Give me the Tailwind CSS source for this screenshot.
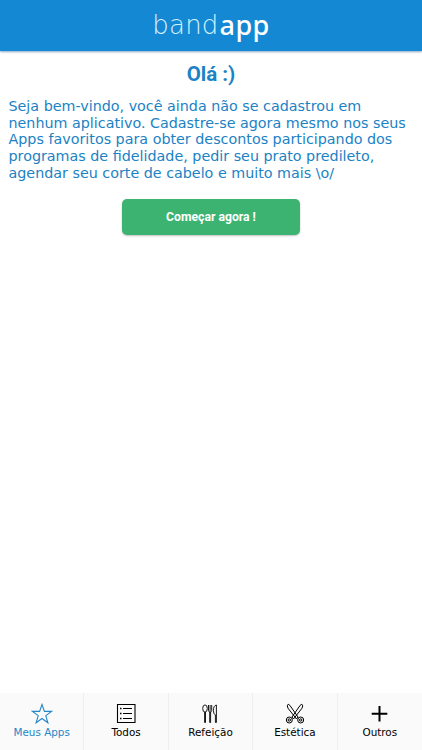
<!DOCTYPE html>
<html lang="pt-BR">
<head>
    <meta charset="UTF-8">
    <meta name="viewport" content="width=device-width, initial-scale=1.0">
    <title>bandapp</title>
    <script src="https://cdn.jsdelivr.net/npm/@tailwindcss/browser@4"></script>
</head>
<body class="h-screen flex flex-col bg-white overflow-hidden font-['DejaVu_Sans',sans-serif]">

    <header class="h-[51px] shrink-0 bg-[#1488d2] flex justify-center text-white shadow-[0_1px_2px_rgba(20,80,130,0.5)]">
        <h1 class="flex items-start whitespace-nowrap leading-9">
            <span class="pt-[7px] font-['DejaVu_Sans_Light','DejaVu_Sans',sans-serif] font-extralight text-[26px] tracking-[0.2px] text-[#d5f3ff]">band</span>
            <span class="pt-[7px] pl-px font-['Noto_Sans',sans-serif] font-medium text-[27px] tracking-[0.4px]">app</span>
        </h1>
    </header>

    <main class="flex-1 flex flex-col items-center text-[#1b82c5]">
        <h2 class="font-[Roboto,sans-serif] font-bold text-[20.5px] leading-6 mt-[11px]">Olá :)</h2>
        <p class="w-full pl-[8.5px] mt-3 text-[14.3px] leading-[16.7px]">Seja bem-vindo, você ainda não se cadastrou em<br>nenhum aplicativo. Cadastre-se agora mesmo nos seus<br>Apps favoritos para obter descontos participando dos<br>programas de fidelidade, pedir seu prato predileto,<br>agendar seu corte de cabelo e muito mais \o/</p>
        <button class="w-[178px] h-9 pt-px mt-[17px] rounded-[5px] bg-[#3cb371] text-white font-[Roboto,sans-serif] font-bold text-[12.2px] shadow-[0_1px_2px_rgba(0,0,0,0.25)]">Começar agora !</button>
    </main>

    <nav class="h-[57px] shrink-0 grid grid-cols-5 bg-[#fafafa] text-black text-[10.4px] leading-3 divide-x divide-[#eeeff1]">
        <a class="flex flex-col items-center pt-[10px] text-[#2588c9]">
            <svg class="w-[22px] h-[22px]" viewBox="0 0 22 22" fill="none" stroke="currentColor" stroke-width="1.1">
                <path d="M11 1.5 13.4 8.4H20.5L14.8 12.6 16.9 19.8 11 15.5 5.1 19.8 7.2 12.6 1.5 8.4H8.6Z"/>
            </svg>
            <span class="mt-px">Meus Apps</span>
        </a>
        <a class="flex flex-col items-center pt-[10px]">
            <svg class="w-[22px] h-[22px]" viewBox="0 0 22 22" fill="none" stroke="currentColor" stroke-width="1.1">
                <path d="M2.5 1.5h17.5v18H2.5ZM8 5.500h9M8 10.500h9M8 15.500h9"/>
                <path d="M5 5.500h1.500M5 10.500h1.500M5 15.500h1.500" stroke-width="1.5"/>
            </svg>
            <span class="mt-px">Todos</span>
        </a>
        <a class="flex flex-col items-center pt-[10px]">
            <svg class="w-[22px] h-[22px]" viewBox="0 0 22 22" fill="none" stroke="currentColor" stroke-width="0.9">
                <ellipse cx="6" cy="5.5" rx="2.3" ry="3.6"/>
                <path d="M5.600 9v10.500h.9V9M9.500 2v5.500q0 1.500 1.600 1.500t1.600-1.500V2M11.100 2v6M10.700 9v10.500h.9V9M17.400 19.500h-1V12q-2-1-2-4.500 0-4.800 3-5.500Z"/>
            </svg>
            <span class="mt-px">Refeição</span>
        </a>
        <a class="flex flex-col items-center pt-[10px]">
            <svg class="w-[22px] h-[22px]" viewBox="0 0 22 22" fill="none" stroke="currentColor" stroke-width="1">
                <path d="M4.200 1.200q-1.800 1.300-.2 4l8.500 10.800 1.500-2L5.900 2.400ZM17.800 1.200q1.800 1.300.2 4L9.500 16l-1.500-2L16.100 2.400Z"/>
                <circle cx="5.300" cy="17" r="3"/>
                <circle cx="16.700" cy="17" r="3"/>
                <circle cx="5.300" cy="17" r="1.200"/>
                <circle cx="16.700" cy="17" r="1.200"/>
            </svg>
            <span class="mt-px">Estética</span>
        </a>
        <a class="flex flex-col items-center pt-[10px]">
            <svg class="w-[22px] h-[22px]" viewBox="0 0 22 22" fill="none" stroke="currentColor" stroke-width="2">
                <path d="M10.500 3v15.500M2.700 10.800h15.600"/>
            </svg>
            <span class="mt-px">Outros</span>
        </a>
    </nav>

</body>
</html>
